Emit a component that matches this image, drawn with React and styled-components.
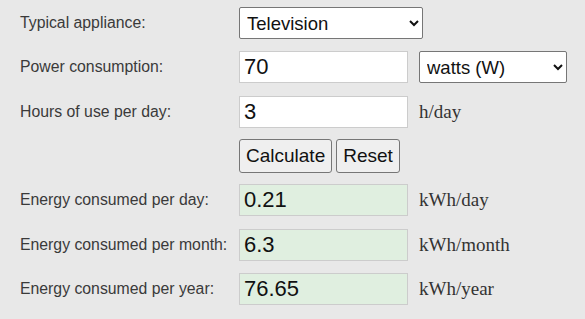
import styled, { createGlobalStyle } from "styled-components"

const GlobalStyle = createGlobalStyle`
    * {
        box-sizing: border-box;
    }
    body {
        margin: 0;
        background: #E8E8E8;
        font-family: "Liberation Sans", Arial, sans-serif;
    }
`

export default function App() {
    return (
        <>
            <GlobalStyle />
            <Form>
                <Row>
                    <Label>Typical appliance:</Label>
                    <Controls>
                        <Select width="184px" defaultValue="tv">
                            <option value="tv">Television</option>
                        </Select>
                    </Controls>
                </Row>
                <Row>
                    <Label>Power consumption:</Label>
                    <Controls>
                        <Field defaultValue="70" />
                        <Select width="148px" defaultValue="w" spaced>
                            <option value="w">watts (W)</option>
                        </Select>
                    </Controls>
                </Row>
                <Row>
                    <Label>Hours of use per day:</Label>
                    <Controls>
                        <Field defaultValue="3" />
                        <Unit>h/day</Unit>
                    </Controls>
                </Row>
                <Row>
                    <Label></Label>
                    <Buttons>
                        <Button>Calculate</Button>
                        <Button>Reset</Button>
                    </Buttons>
                </Row>
                <Row>
                    <Label>Energy consumed per day:</Label>
                    <Controls>
                        <Field result readOnly value="0.21" />
                        <Unit>kWh/day</Unit>
                    </Controls>
                </Row>
                <Row>
                    <Label>Energy consumed per month:</Label>
                    <Controls>
                        <Field result readOnly value="6.3" />
                        <Unit>kWh/month</Unit>
                    </Controls>
                </Row>
                <Row>
                    <Label>Energy consumed per year:</Label>
                    <Controls>
                        <Field result readOnly value="76.65" />
                        <Unit>kWh/year</Unit>
                    </Controls>
                </Row>
            </Form>
        </>
    )
}

const Form = styled.div`
    display: grid;
    grid-auto-rows: 44.3px;
    padding: 1px 0 0 20px;
    width: 585px;
`
const Row = styled.div`
    display: grid;
    grid-template-columns: 219px 1fr;
    align-items: center;
`
const Label = styled.span`
    font-size: 15.8px;
    color: #3A3A3A;
`
const Controls = styled.div`
    display: flex;
    align-items: center;
`
const Select = styled.select`
    width: ${p => p.width};
    height: 32px;
    margin-left: ${p => (p.spaced ? "11px" : "0")};
    padding: 0 3px;
    font-family: "Liberation Sans", Arial, sans-serif;
    font-size: 18.5px;
    color: #111111;
    background: #FFFFFF;
    border: 1px solid #767676;
    border-radius: 2px;
`
const Field = styled.input`
    width: 169px;
    height: 32px;
    padding: 0 4px;
    font-family: "Liberation Sans", Arial, sans-serif;
    font-size: 22px;
    color: #111111;
    background: ${p => (p.result ? "#E0EFE0" : "#FFFFFF")};
    border: 1px solid #CCCCCC;
    border-radius: 0;
    outline: none;
`
const Unit = styled.span`
    margin-left: 11px;
    font-family: "Liberation Serif", "Times New Roman", serif;
    font-size: 19px;
    color: #333333;
`
const Buttons = styled.div`
    display: flex;
    gap: 4px;
`
const Button = styled.button`
    height: 34px;
    padding: 0 6px;
    font-family: "Liberation Sans", Arial, sans-serif;
    font-size: 19px;
    color: #111111;
    background: #EFEFEF;
    border: 1px solid #767676;
    border-radius: 3px;
`
